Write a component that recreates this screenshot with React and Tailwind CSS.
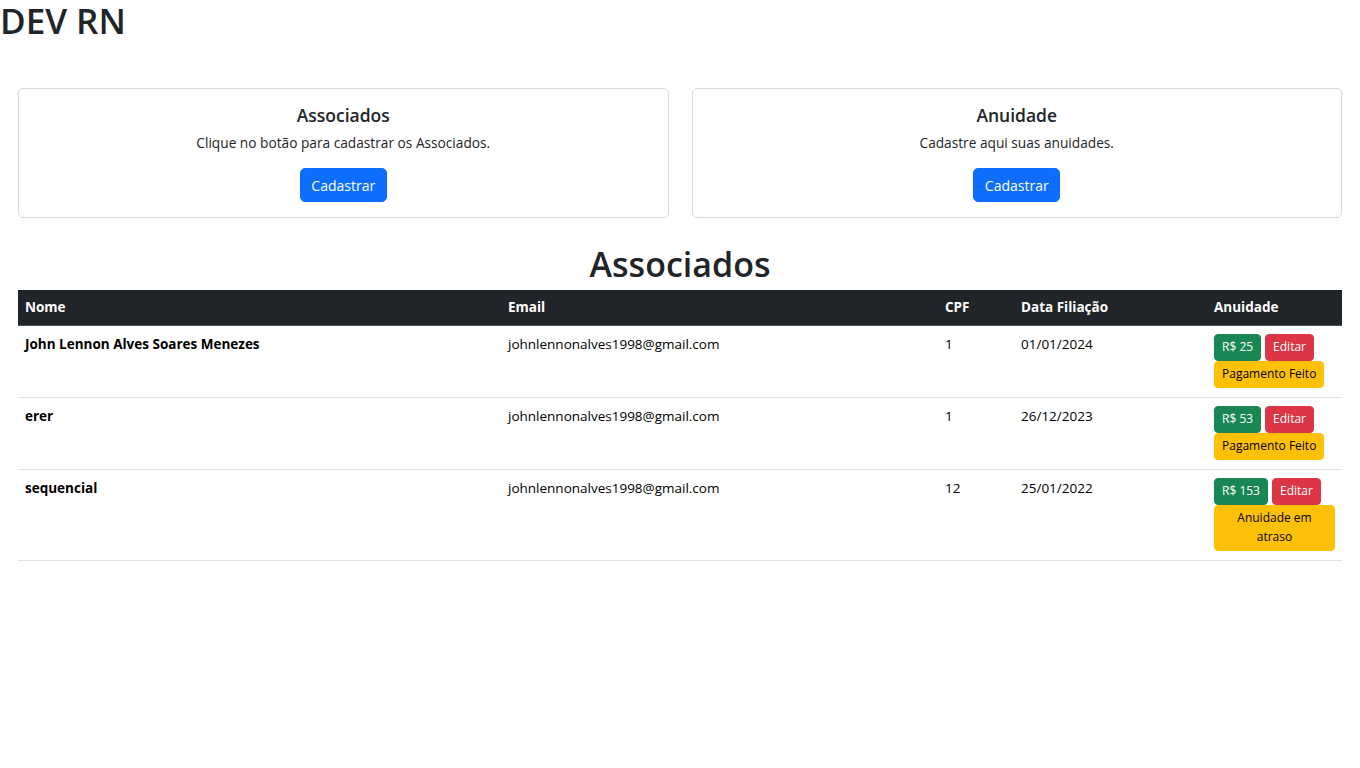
const associados = [
  { nome: "John Lennon Alves Soares Menezes", email: "johnlennonalves1998@gmail.com", cpf: "1", data: "01/01/2024", valor: "R$ 25", pago: true },
  { nome: "erer", email: "johnlennonalves1998@gmail.com", cpf: "1", data: "26/12/2023", valor: "R$ 53", pago: true },
  { nome: "sequencial", email: "johnlennonalves1998@gmail.com", cpf: "12", data: "25/01/2022", valor: "R$ 153", pago: false },
];

const Card = ({ title, text }) => (
  <div className="flex-1 border border-[#d9d9d9] rounded-[5px] px-[14px] pt-[16px] pb-[15px] text-center">
    <h5 className="text-[17.5px] leading-[21px] font-semibold mb-[6px]">{title}</h5>
    <p className="text-[13.7px] leading-[21px] mb-[15px]">{text}</p>
    <button className="bg-[#0d6efd] text-white text-[14px] leading-[21px] px-[10.5px] py-[5.5px] rounded-[5px] border border-[#0d6efd]">
      Cadastrar
    </button>
  </div>
);

const App = () => {
  return (
    <div className="min-h-[768px] bg-white text-[#212529] font-['Open_Sans',sans-serif] text-[14px]">
      <h1 className="text-[35px] leading-[42px] font-semibold">DEV RN</h1>

      <div className="px-[18px] mt-[46px] flex gap-[23px]">
        <Card title="Associados" text="Clique no botão para cadastrar os Associados." />
        <Card title="Anuidade" text="Cadastre aqui suas anuidades." />
      </div>

      <div className="px-[18px]">
        <h2 className="text-center text-[34px] leading-[42px] font-semibold mt-[25px] mb-[5px]">Associados</h2>
        <table className="w-full table-fixed border-collapse text-[13.5px] leading-[21px]">
          <colgroup>
            <col className="w-[483px]" />
            <col className="w-[437px]" />
            <col className="w-[76px]" />
            <col className="w-[193px]" />
            <col className="w-[135px]" />
          </colgroup>
          <thead>
            <tr className="bg-[#212529] text-white text-left">
              <th className="px-[7px] py-[7px] font-bold border-b border-[#4d5154]">Nome</th>
              <th className="px-[7px] py-[7px] font-bold border-b border-[#4d5154]">Email</th>
              <th className="px-[7px] py-[7px] font-bold border-b border-[#4d5154]">CPF</th>
              <th className="px-[7px] py-[7px] font-bold border-b border-[#4d5154]">Data Filiação</th>
              <th className="px-[7px] py-[7px] font-bold border-b border-[#4d5154]">Anuidade</th>
            </tr>
          </thead>
          <tbody>
            {associados.map((a) => (
              <tr key={a.nome} className="border-b border-[#dee2e6] align-top text-black">
                <th className="px-[7px] pt-[8px] pb-[9px] font-bold text-left">{a.nome}</th>
                <td className="px-[7px] pt-[8px] pb-[9px]">{a.email}</td>
                <td className="px-[7px] pt-[8px] pb-[9px]">{a.cpf}</td>
                <td className="px-[7px] pt-[8px] pb-[9px]">{a.data}</td>
                <td className="px-[7px] pt-[8px] pb-[9px]">
                  <div className="flex flex-wrap gap-x-[4px] text-[12px] leading-[18.5px]">
                    <button className="bg-[#198754] text-white px-[7px] py-[3.25px] rounded-[4px] border border-[#198754]">{a.valor}</button>
                    <button className="bg-[#dc3545] text-white px-[7px] py-[3.25px] rounded-[4px] border border-[#dc3545]">Editar</button>
                    <button className="bg-[#ffc107] text-black px-[7px] py-[3.25px] rounded-[4px] border border-[#ffc107] max-w-[121px] text-center">
                      {a.pago ? "Pagamento Feito" : "Anuidade em atraso"}
                    </button>
                  </div>
                </td>
              </tr>
            ))}
          </tbody>
        </table>
      </div>
    </div>
  );
};

export default App;
